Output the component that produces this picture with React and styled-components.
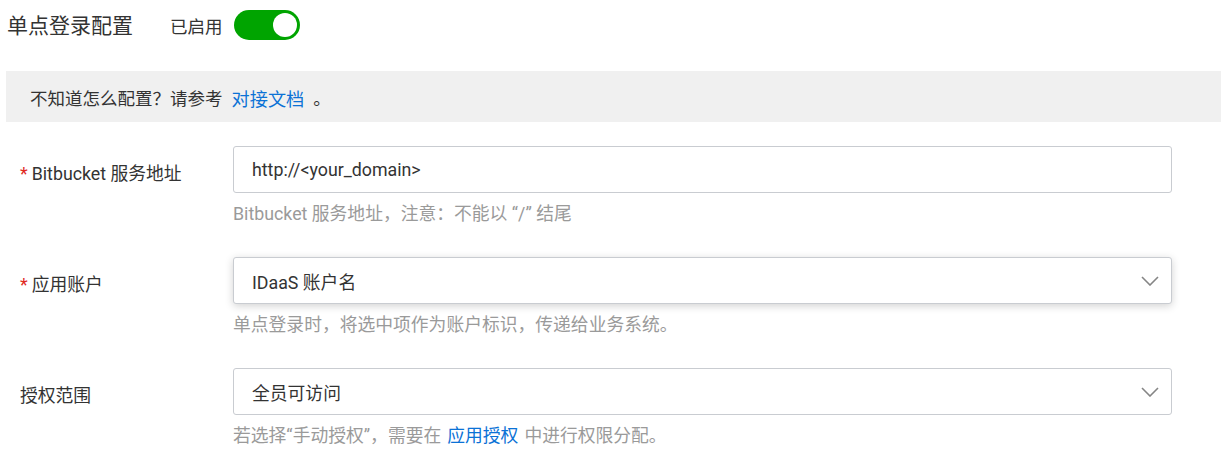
import React from 'react';
import styled, { createGlobalStyle } from 'styled-components';

const GlobalStyle = createGlobalStyle`
  body {
    margin: 0;
    background: #fff;
    font-family: Roboto, "Noto Sans CJK SC", sans-serif;
    color: #333;
  }
`;

const Page = styled.div`
  width: 1221px;
  padding-left: 6px;
  box-sizing: border-box;
`;

const Header = styled.div`
  display: flex;
  align-items: center;
  height: 30px;
  padding-top: 10px;
  margin-bottom: 31px;
`;

const Title = styled.h2`
  margin: 0 37px 0 1px;
  font-size: 21px;
  font-weight: 400;
  line-height: 30px;
  color: #333;
  position: relative;
  top: 1px;
`;

const Status = styled.span`
  font-size: 17.5px;
  color: #333;
  margin-right: 11px;
`;

const Toggle = styled.span`
  display: inline-flex;
  align-items: center;
  justify-content: ${p => (p.$on ? 'flex-end' : 'flex-start')};
  width: 66px;
  height: 30px;
  padding: 0 3px;
  box-sizing: border-box;
  border-radius: 15px;
  background: ${p => (p.$on ? '#00a400' : '#ccc')};
`;

const Knob = styled.span`
  width: 24px;
  height: 24px;
  border-radius: 50%;
  background: #fff;
`;

const Banner = styled.div`
  display: flex;
  align-items: center;
  height: 51px;
  padding: 2px 0 0 24px;
  box-sizing: border-box;
  background: #f0f0f0;
  font-size: 17.5px;
  color: #333;
  margin-bottom: 24px;
`;

const Link = styled.a`
  color: #0b72d6;
  text-decoration: none;
  margin: 0 ${p => p.$gap || 0}px;
  font-size: ${p => p.$size || 'inherit'};
`;

const Row = styled.div`
  display: flex;
  margin-bottom: 32px;
`;

const Label = styled.label`
  width: 227px;
  flex-shrink: 0;
  padding: 16px 0 0 14px;
  box-sizing: border-box;
  font-size: 17.8px;
  line-height: 24px;
  color: #333;
`;

const Star = styled.span`
  color: #e0281e;
  margin-right: 4px;
`;

const Field = styled.div`
  width: 939px;
`;

const Box = styled.div`
  display: flex;
  align-items: center;
  justify-content: space-between;
  height: 47px;
  padding: 0 12px 0 18px;
  box-sizing: border-box;
  border: 1px solid #c9ccd1;
  border-radius: 3px;
  background: #fff;
  font-size: 17.8px;
  color: #333;
  box-shadow: ${p => (p.$active ? '0 2px 8px rgba(0, 0, 0, 0.18)' : 'none')};
`;

const Hint = styled.div`
  margin-top: 10px;
  font-size: 17.8px;
  line-height: 22px;
  color: #9a9a9a;
`;

const Chevron = () => (
  <svg width="18" height="10" viewBox="0 0 18 10" fill="none">
    <polyline points="1,1 9,9 17,1" stroke="#858585" strokeWidth="1.6" />
  </svg>
);

export default function App() {
  return (
    <Page>
      <GlobalStyle />
      <Header>
        <Title>单点登录配置</Title>
        <Status>已启用</Status>
        <Toggle $on>
          <Knob />
        </Toggle>
      </Header>

      <Banner>
        不知道怎么配置？请参考<Link $gap={9} $size="18.2px">对接文档</Link>。
      </Banner>

      <Row>
        <Label><Star>*</Star>Bitbucket 服务地址</Label>
        <Field>
          <Box>http://&lt;your_domain&gt;</Box>
          <Hint>Bitbucket 服务地址，注意：不能以 “/” 结尾</Hint>
        </Field>
      </Row>

      <Row>
        <Label><Star>*</Star>应用账户</Label>
        <Field>
          <Box $active>
            IDaaS 账户名
            <Chevron />
          </Box>
          <Hint>单点登录时，将选中项作为账户标识，传递给业务系统。</Hint>
        </Field>
      </Row>

      <Row>
        <Label>授权范围</Label>
        <Field>
          <Box>
            全员可访问
            <Chevron />
          </Box>
          <Hint>若选择“手动授权”，需要在<Link $gap={6}>应用授权</Link>中进行权限分配。</Hint>
        </Field>
      </Row>
    </Page>
  );
}
